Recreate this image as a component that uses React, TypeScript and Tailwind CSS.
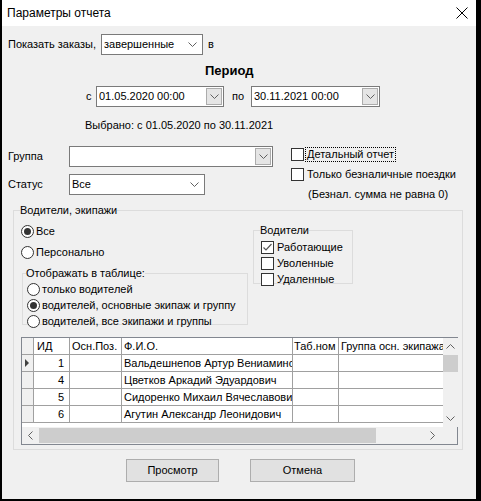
import React from 'react';

const font = "font-['Liberation_Sans',sans-serif] text-[11px] leading-[13px]";

function Chevron({ className = '' }: { className?: string }) {
  return (
    <svg width="9" height="5" viewBox="0 0 9 5" className={className}>
      <path d="M0.5 0.5 L4.5 4.5 L8.5 0.5" fill="none" stroke="#606060" strokeWidth="1" />
    </svg>
  );
}

function ListCombo({ value, width }: { value: string; width: string }) {
  return (
    <div className={`${width} h-[21px] bg-white border border-[#7a7a7a] flex items-center pl-[2px] pr-[5px]`}>
      <span className="flex-1 truncate">{value}</span>
      <Chevron />
    </div>
  );
}

function ButtonCombo({ value, width }: { value: string; width: string }) {
  return (
    <div className={`${width} h-[21px] bg-white border border-[#7a7a7a] flex items-center pl-[2px] pr-px`}>
      <span className="flex-1 truncate">{value}</span>
      <div className="w-[16px] h-[17px] bg-[#e5e5e5] border border-[#acacac] flex items-center justify-center">
        <Chevron />
      </div>
    </div>
  );
}

function Radio({ checked, label }: { checked?: boolean; label: string }) {
  return (
    <div className="flex items-center h-[13px]">
      <div className="w-[13px] h-[13px] shrink-0 rounded-full border border-[#333] bg-white flex items-center justify-center">
        {checked && <div className="w-[7px] h-[7px] rounded-full bg-[#333]" />}
      </div>
      <span className="ml-[2px] whitespace-nowrap">{label}</span>
    </div>
  );
}

function Check({ checked, label, focus }: { checked?: boolean; label: string; focus?: boolean }) {
  return (
    <div className="flex items-center h-[13px]">
      <div className="w-[13px] h-[13px] shrink-0 border border-[#333] bg-white flex items-center justify-center">
        {checked && (
          <svg width="11" height="11" viewBox="0 0 11 11">
            <path d="M1.5 5.5 L4 8 L9.5 2" fill="none" stroke="#555" strokeWidth="1.2" />
          </svg>
        )}
      </div>
      <span className={`ml-[2px] whitespace-nowrap px-px ${focus ? 'outline outline-1 outline-dotted outline-black' : ''}`}>
        {label}
      </span>
    </div>
  );
}

const rows = [
  { id: 1, name: 'Вальдешнепов Артур Вениаминович' },
  { id: 4, name: 'Цветков Аркадий Эдуардович' },
  { id: 5, name: 'Сидоренко Михаил Вячеславович' },
  { id: 6, name: 'Агутин Александр Леонидович' },
];

function Grid() {
  const cell = 'h-[17px] border-r border-b border-[#a0a0a0] flex items-center overflow-hidden whitespace-nowrap';
  return (
    <div className="ml-[7px] mt-[12px] w-[437px] h-[108px] border border-[#828790] bg-white flex flex-col">
      <div className="flex flex-1 min-h-0">
        <div className="flex-1 flex flex-col">
          {/* header */}
          <div className="flex">
            <div className={`${cell} w-[12px] bg-[#f0f0f0]`} />
            <div className={`${cell} w-[36px] pl-[3px]`}>ИД</div>
            <div className={`${cell} w-[52px] pl-[2px]`}>Осн.Поз.</div>
            <div className={`${cell} w-[171px] pl-[2px]`}>Ф.И.О.</div>
            <div className={`${cell} w-[46px] pl-[1px]`}>Таб.ном</div>
            <div className={`${cell} w-[104px] pl-[2px] border-r-0`}>Группа осн. экипажа</div>
          </div>
          {rows.map((r, i) => (
            <div key={r.id} className="flex">
              <div className={`${cell} w-[12px] bg-[#f0f0f0] justify-center`}>
                {i === 0 && (
                  <svg width="5" height="8" viewBox="0 0 5 8">
                    <path d="M0 0 L4 4 L0 8 Z" fill="#404040" />
                  </svg>
                )}
              </div>
              <div className={`${cell} w-[36px] justify-end pr-[5px]`}>{r.id}</div>
              <div className={`${cell} w-[52px]`} />
              <div className={`${cell} w-[171px] pl-[2px]`}>{r.name}</div>
              <div className={`${cell} w-[46px]`} />
              <div className={`${cell} w-[104px] border-r-0`} />
            </div>
          ))}
        </div>
        {/* vertical scrollbar */}
        <div className="w-[16px] bg-[#f0f0f0] flex flex-col items-center">
          <div className="h-[17px] flex items-center justify-center">
            <Chevron className="rotate-180" />
          </div>
          <div className="w-[15px] h-[17px] bg-[#cdcdcd]" />
          <div className="flex-1" />
          <div className="h-[17px] flex items-center justify-center">
            <Chevron />
          </div>
        </div>
      </div>
      {/* horizontal scrollbar */}
      <div className="h-[17px] flex bg-[#f0f0f0]">
        <div className="w-[17px] flex items-center justify-center">
          <Chevron className="rotate-90" />
        </div>
        <div className="w-[337px] bg-[#cdcdcd] my-px" />
        <div className="flex-1" />
        <div className="w-[17px] flex items-center justify-center">
          <Chevron className="-rotate-90" />
        </div>
        <div className="w-[16px]" />
      </div>
    </div>
  );
}

export default function App() {
  return (
    <div className={`w-[481px] h-[501px] bg-black pl-[2px] pr-[5px] pb-[2px] text-black ${font}`}>
      <div className="w-full h-full bg-[#f0f0f0] flex flex-col">
        {/* title bar */}
        <div className="h-[26px] bg-white flex items-center pl-[5px] shrink-0">
          <span className="text-[12px]">Параметры отчета</span>
          <svg width="12" height="12" viewBox="0 0 12 12" className="ml-auto mr-[8px]">
            <path d="M0.5 0.5 L11.5 11.5 M11.5 0.5 L0.5 11.5" stroke="#000" strokeWidth="1" />
          </svg>
        </div>

        {/* show orders */}
        <div className="flex items-center mt-[8px] ml-[6px]">
          <span className="w-[93px] whitespace-nowrap">Показать заказы,</span>
          <ListCombo value="завершенные" width="w-[102px]" />
          <span className="ml-[5px]">в</span>
        </div>

        {/* period */}
        <div className="mt-[8px] ml-[203px] font-bold text-[13px] leading-[16px]">Период</div>

        <div className="flex items-center mt-[7px] ml-[84px]">
          <span className="w-[10px]">с</span>
          <ButtonCombo value="01.05.2020 00:00" width="w-[128px]" />
          <span className="w-[27px] pl-[8px]">по</span>
          <ButtonCombo value="30.11.2021 00:00" width="w-[129px]" />
        </div>

        <div className="mt-[12px] ml-[83px]">Выбрано: с 01.05.2020 по 30.11.2021</div>

        {/* group / status */}
        <div className="flex items-start h-[49px] mt-[14px] ml-[6px]">
          <div className="flex flex-col gap-[7px]">
            <div className="flex items-center">
              <span className="w-[61px]">Группа</span>
              <ButtonCombo value="" width="w-[204px]" />
            </div>
            <div className="flex items-center">
              <span className="w-[61px]">Статус</span>
              <ListCombo value="Все" width="w-[136px]" />
            </div>
          </div>
          <div className="ml-[18px] mt-[2px] flex flex-col">
            <Check label="Детальный отчет" focus />
            <div className="mt-[7px]">
              <Check label="Только безналичные поездки" />
            </div>
            <div className="mt-[7px] ml-[17px]">(Безнал. сумма не равна 0)</div>
          </div>
        </div>

        {/* drivers group */}
        <fieldset className="mt-[9px] ml-[11px] w-[450px] min-w-0 h-[246px] border border-[#dcdcdc] shrink-0">
          <legend className="ml-[6px] px-0">Водители, экипажи</legend>
          <div className="flex">
            <div className="flex flex-col ml-[7px] mt-[8px]">
              <Radio checked label="Все" />
              <div className="mt-[8px]">
                <Radio label="Персонально" />
              </div>
              <fieldset className="mt-[8px] ml-[1px] w-[226px] min-w-0 h-[58px] border border-[#dcdcdc]">
                <legend className="ml-[3px] px-0">Отображать в таблице:</legend>
                <div className="flex flex-col gap-[3px] ml-[4px] mt-[3px]">
                  <Radio label="только водителей" />
                  <Radio checked label="водителей, основные экипаж и группу" />
                  <Radio label="водителей, все экипажи и группы" />
                </div>
              </fieldset>
            </div>
            <fieldset className="ml-auto mr-[109px] mt-[7px] w-[100px] min-w-0 h-[60px] border border-[#dcdcdc]">
              <legend className="ml-[6px] px-0">Водители</legend>
              <div className="flex flex-col gap-[3px] ml-[7px] mt-[4px]">
                <Check checked label="Работающие" />
                <Check label="Уволенные" />
                <Check label="Удаленные" />
              </div>
            </fieldset>
          </div>
          <Grid />
        </fieldset>

        {/* buttons */}
        <div className="flex mt-[9px] ml-[124px] gap-[31px]">
          <button className="w-[93px] h-[23px] bg-[#e1e1e1] border border-[#adadad]">Просмотр</button>
          <button className="w-[105px] h-[23px] bg-[#e1e1e1] border border-[#adadad]">Отмена</button>
        </div>
      </div>
    </div>
  );
}
